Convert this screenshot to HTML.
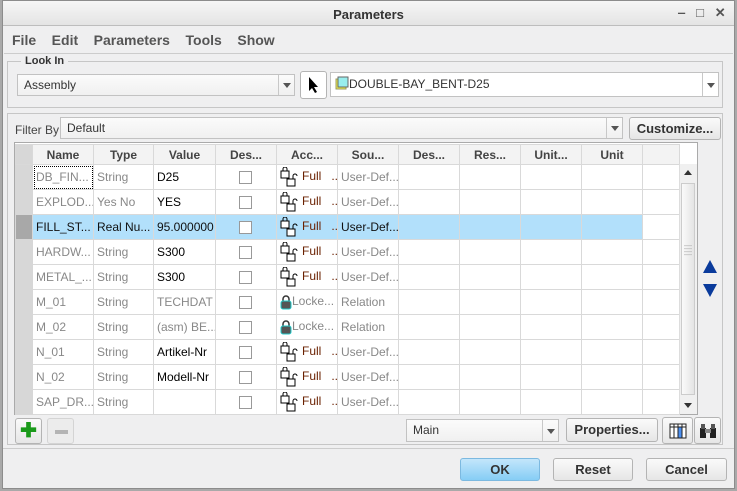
<!DOCTYPE html>
<html><head><style>
*{box-sizing:border-box;margin:0;padding:0}
body{width:737px;height:491px;overflow:hidden;background:#a9a9a9;font-family:"Liberation Sans",sans-serif;font-size:12px;color:#222;position:relative}
.a{position:absolute}
#win{left:2px;top:0;width:733px;height:489px;background:#efeff0;border:1px solid #8c8c8c}
.btn{position:absolute;border:1px solid #b4b4b4;border-radius:3px;background:linear-gradient(#fafafa,#e6e6e6);text-align:center;font-weight:bold;color:#333;font-size:13px}
.combo{position:absolute;border:1px solid #c2c2c2;background:linear-gradient(#fbfbfb,#f0f0f0);padding-left:6px;color:#333}
.combo .dd{position:absolute;right:0;top:0;bottom:0;width:16px;border-left:1px solid #c8c8c8}
.combo .dd:after{content:"";position:absolute;left:4px;top:50%;margin-top:-2px;border:4px solid transparent;border-top:5px solid #555;border-bottom:0}
.grp{position:absolute;border:1px solid #c6c6c6}
table{border-collapse:collapse;table-layout:fixed;position:absolute;left:15px;top:144px;width:664px;background:#fff}
td,th{border:1px solid #d9d9d9;height:25px;white-space:nowrap;overflow:hidden;padding-left:3px;text-align:left;font-weight:normal}
th{height:20px;background:#f3f3f3;font-weight:bold;color:#444;text-align:center;padding:0;font-size:12px}
td.rh{background:#d7d7d7;border-color:#d7d7d7}
th.rh{background:#d7d7d7}
.g{color:#888}
.k{color:#000}
tr.sel td{background:#b2e0fb;color:#111}
tr.sel td.rh{background:#a8a8a8}
.cb{display:inline-block;width:13px;height:13px;border:1px solid #999;background:#fff;margin-left:20px;vertical-align:middle}
.full{color:#6a2000;font-size:12px}
</style></head><body>
<div id="win" class="a"></div>
<div class="a" style="left:3px;top:1px;width:731px;height:25px;background:linear-gradient(#f6f6f6,#e4e4e4);border-bottom:1px solid #bdbdbd;text-align:center;line-height:27px;font-weight:bold;font-size:13px;color:#333">Parameters</div>
<div class="a" style="left:678px;top:5px;font-size:13px;color:#555;font-weight:bold;white-space:nowrap;width:60px">‒&nbsp;&nbsp; □&nbsp;&nbsp; ✕</div>
<div class="a" style="left:12px;top:32px;font-size:14px;color:#555;font-weight:bold;white-space:nowrap">File&nbsp;&nbsp;&nbsp; Edit&nbsp;&nbsp;&nbsp; Parameters&nbsp;&nbsp;&nbsp; Tools&nbsp;&nbsp;&nbsp; Show</div>
<div class="a" style="left:4px;top:53px;width:729px;border-top:1px solid #ccc"></div>
<div class="grp" style="left:7px;top:61px;width:716px;height:47px"></div>
<div class="a" style="left:21px;top:55px;background:#efeff0;padding:0 4px;font-weight:bold;font-size:11px;color:#333">Look In</div>
<div class="combo" style="left:17px;top:74px;width:278px;height:22px;line-height:20px">Assembly<div class="dd"></div></div>
<div class="btn" style="left:300px;top:71px;width:27px;height:28px;background:#fff"><svg width="14" height="18" style="margin-top:4px" viewBox="0 0 14 18"><path d="M2 1 L2 15 L5 12 L8 17 L10 16 L7 11 L11 11 Z" fill="#000"/></svg></div>
<div class="combo" style="left:330px;top:72px;width:389px;height:25px;line-height:23px;padding-left:4px;background:#fff"><svg width="14" height="14" style="vertical-align:-2px" viewBox="0 0 14 14"><rect x="1" y="3" width="10" height="10" fill="#ee4" stroke="#996"/><rect x="3" y="1" width="10" height="10" fill="#9ee" stroke="#666"/></svg>DOUBLE-BAY_BENT-D25<div class="dd"></div></div>
<div class="grp" style="left:7px;top:113px;width:716px;height:332px"></div>
<div class="a" style="left:15px;top:123px;color:#444">Filter By</div>
<div class="combo" style="left:60px;top:117px;width:563px;height:22px;line-height:20px">Default<div class="dd"></div></div>
<div class="btn" style="left:629px;top:117px;width:92px;height:23px;line-height:21px">Customize...</div>
<div class="a" style="left:14px;top:142px;width:684px;height:273px;border:1px solid #aaa;background:#fff;overflow:hidden"></div>
<table>
<colgroup><col style="width:17px"><col style="width:61px"><col style="width:60px"><col style="width:62px"><col style="width:61px"><col style="width:61px"><col style="width:61px"><col style="width:61px"><col style="width:61px"><col style="width:61px"><col style="width:61px"><col style="width:37px"></colgroup>
<tr><th class="rh"></th><th>Name</th><th>Type</th><th>Value</th><th>Des...</th><th>Acc...</th><th>Sou...</th><th>Des...</th><th>Res...</th><th>Unit...</th><th>Unit</th><th></th></tr>
<tr><td class="rh"></td><td class="g" style="outline:1px dotted #000;outline-offset:-2px">DB_FIN...</td><td class="g">String</td><td class="k">D25</td><td><span class="cb"></span></td><td><svg width="22" height="20" viewBox="0 0 22 20" style="vertical-align:middle"><rect x="1" y="4" width="8" height="7" fill="#fff" stroke="#000"/><path d="M3 4V2a2 2 0 0 1 4 0v2" fill="none" stroke="#000"/><rect x="7" y="12" width="8" height="7" fill="#fff" stroke="#000"/><path d="M13 12V9a2 2 0 0 1 4 0" fill="none" stroke="#000"/></svg><span class="full">Full&nbsp;&nbsp; ...</span></td><td class="g">User-Def...</td><td></td><td></td><td></td><td></td><td></td></tr>
<tr><td class="rh"></td><td class="g">EXPLOD...</td><td class="g">Yes No</td><td class="k">YES</td><td><span class="cb"></span></td><td><svg width="22" height="20" viewBox="0 0 22 20" style="vertical-align:middle"><rect x="1" y="4" width="8" height="7" fill="#fff" stroke="#000"/><path d="M3 4V2a2 2 0 0 1 4 0v2" fill="none" stroke="#000"/><rect x="7" y="12" width="8" height="7" fill="#fff" stroke="#000"/><path d="M13 12V9a2 2 0 0 1 4 0" fill="none" stroke="#000"/></svg><span class="full">Full&nbsp;&nbsp; ...</span></td><td class="g">User-Def...</td><td></td><td></td><td></td><td></td><td></td></tr>
<tr class="sel"><td class="rh"></td><td>FILL_ST...</td><td>Real Nu...</td><td>95.000000</td><td><span class="cb"></span></td><td><svg width="22" height="20" viewBox="0 0 22 20" style="vertical-align:middle"><rect x="1" y="4" width="8" height="7" fill="#fff" stroke="#000"/><path d="M3 4V2a2 2 0 0 1 4 0v2" fill="none" stroke="#000"/><rect x="7" y="12" width="8" height="7" fill="#fff" stroke="#000"/><path d="M13 12V9a2 2 0 0 1 4 0" fill="none" stroke="#000"/></svg><span class="full">Full&nbsp;&nbsp; ...</span></td><td>User-Def...</td><td></td><td></td><td></td><td></td><td style="background:#fff"></td></tr>
<tr><td class="rh"></td><td class="g">HARDW...</td><td class="g">String</td><td class="k">S300</td><td><span class="cb"></span></td><td><svg width="22" height="20" viewBox="0 0 22 20" style="vertical-align:middle"><rect x="1" y="4" width="8" height="7" fill="#fff" stroke="#000"/><path d="M3 4V2a2 2 0 0 1 4 0v2" fill="none" stroke="#000"/><rect x="7" y="12" width="8" height="7" fill="#fff" stroke="#000"/><path d="M13 12V9a2 2 0 0 1 4 0" fill="none" stroke="#000"/></svg><span class="full">Full&nbsp;&nbsp; ...</span></td><td class="g">User-Def...</td><td></td><td></td><td></td><td></td><td></td></tr>
<tr><td class="rh"></td><td class="g">METAL_...</td><td class="g">String</td><td class="k">S300</td><td><span class="cb"></span></td><td><svg width="22" height="20" viewBox="0 0 22 20" style="vertical-align:middle"><rect x="1" y="4" width="8" height="7" fill="#fff" stroke="#000"/><path d="M3 4V2a2 2 0 0 1 4 0v2" fill="none" stroke="#000"/><rect x="7" y="12" width="8" height="7" fill="#fff" stroke="#000"/><path d="M13 12V9a2 2 0 0 1 4 0" fill="none" stroke="#000"/></svg><span class="full">Full&nbsp;&nbsp; ...</span></td><td class="g">User-Def...</td><td></td><td></td><td></td><td></td><td></td></tr>
<tr><td class="rh"></td><td class="g">M_01</td><td class="g">String</td><td class="g">TECHDAT</td><td><span class="cb"></span></td><td class="g"><svg width="12" height="15" viewBox="0 0 12 15" style="vertical-align:middle"><path d="M3 6V4a3 3 0 0 1 6 0v2" fill="none" stroke="#333" stroke-width="1.5"/><rect x="1" y="6" width="10" height="8" rx="2" fill="#555" stroke="#2cc"/></svg>Locke...</td><td class="g">Relation</td><td></td><td></td><td></td><td></td><td></td></tr>
<tr><td class="rh"></td><td class="g">M_02</td><td class="g">String</td><td class="g">(asm) BE...</td><td><span class="cb"></span></td><td class="g"><svg width="12" height="15" viewBox="0 0 12 15" style="vertical-align:middle"><path d="M3 6V4a3 3 0 0 1 6 0v2" fill="none" stroke="#333" stroke-width="1.5"/><rect x="1" y="6" width="10" height="8" rx="2" fill="#555" stroke="#2cc"/></svg>Locke...</td><td class="g">Relation</td><td></td><td></td><td></td><td></td><td></td></tr>
<tr><td class="rh"></td><td class="g">N_01</td><td class="g">String</td><td class="k">Artikel-Nr</td><td><span class="cb"></span></td><td><svg width="22" height="20" viewBox="0 0 22 20" style="vertical-align:middle"><rect x="1" y="4" width="8" height="7" fill="#fff" stroke="#000"/><path d="M3 4V2a2 2 0 0 1 4 0v2" fill="none" stroke="#000"/><rect x="7" y="12" width="8" height="7" fill="#fff" stroke="#000"/><path d="M13 12V9a2 2 0 0 1 4 0" fill="none" stroke="#000"/></svg><span class="full">Full&nbsp;&nbsp; ...</span></td><td class="g">User-Def...</td><td></td><td></td><td></td><td></td><td></td></tr>
<tr><td class="rh"></td><td class="g">N_02</td><td class="g">String</td><td class="k">Modell-Nr</td><td><span class="cb"></span></td><td><svg width="22" height="20" viewBox="0 0 22 20" style="vertical-align:middle"><rect x="1" y="4" width="8" height="7" fill="#fff" stroke="#000"/><path d="M3 4V2a2 2 0 0 1 4 0v2" fill="none" stroke="#000"/><rect x="7" y="12" width="8" height="7" fill="#fff" stroke="#000"/><path d="M13 12V9a2 2 0 0 1 4 0" fill="none" stroke="#000"/></svg><span class="full">Full&nbsp;&nbsp; ...</span></td><td class="g">User-Def...</td><td></td><td></td><td></td><td></td><td></td></tr>
<tr><td class="rh"></td><td class="g">SAP_DR...</td><td class="g">String</td><td></td><td><span class="cb"></span></td><td><svg width="22" height="20" viewBox="0 0 22 20" style="vertical-align:middle"><rect x="1" y="4" width="8" height="7" fill="#fff" stroke="#000"/><path d="M3 4V2a2 2 0 0 1 4 0v2" fill="none" stroke="#000"/><rect x="7" y="12" width="8" height="7" fill="#fff" stroke="#000"/><path d="M13 12V9a2 2 0 0 1 4 0" fill="none" stroke="#000"/></svg><span class="full">Full&nbsp;&nbsp; ...</span></td><td class="g">User-Def...</td><td></td><td></td><td></td><td></td><td></td></tr>
</table>
<div class="a" style="left:679px;top:164px;width:18px;height:250px;background:#f0f0f0;border-left:1px solid #ddd"></div>
<div class="a" style="left:681px;top:183px;width:14px;height:212px;background:linear-gradient(90deg,#fafafa,#e4e4e4);border:1px solid #ccc"></div>
<div class="a" style="left:684px;top:244px;color:#aaa;font-size:8px;line-height:3px">—<br>—<br>—<br>—</div>
<div class="a" style="left:684px;top:170px;border:4px solid transparent;border-bottom:5px solid #333;border-top:0"></div>
<div class="a" style="left:684px;top:403px;border:4px solid transparent;border-top:5px solid #333;border-bottom:0"></div>
<div class="a" style="left:703px;top:260px;border:7px solid transparent;border-bottom:13px solid #0a3b9c;border-top:0"></div>
<div class="a" style="left:703px;top:284px;border:7px solid transparent;border-top:13px solid #0a3b9c;border-bottom:0"></div>
<div class="btn" style="left:15px;top:418px;width:27px;height:26px;color:#1a9a1a;font-size:20px;line-height:24px">✚</div>
<div class="btn" style="left:47px;top:418px;width:27px;height:26px;background:#ececec;border-color:#d4d4d4"><div class="a" style="left:7px;top:11px;width:13px;height:4px;background:#b4b4b4"></div></div>
<div class="combo" style="left:406px;top:419px;width:153px;height:23px;line-height:21px;font-size:12px">Main<div class="dd"></div></div>
<div class="btn" style="left:566px;top:418px;width:92px;height:24px;line-height:22px">Properties...</div>
<div class="btn" style="left:662px;top:417px;width:31px;height:27px"><svg width="18" height="16" viewBox="0 0 18 16" style="margin-top:5px"><rect x="1" y="1" width="16" height="14" fill="#fff" stroke="#222"/><path d="M1 4H17M5 1V15M9 1V15M13 1V15" stroke="#222"/><rect x="9.5" y="4.5" width="3" height="10" fill="#4a8ff0"/></svg></div>
<div class="btn" style="left:694px;top:417px;width:27px;height:27px"><svg width="18" height="16" viewBox="0 0 18 16" style="margin-top:5px"><rect x="1" y="5" width="6" height="10" fill="#222"/><rect x="11" y="5" width="6" height="10" fill="#222"/><rect x="2" y="1" width="4" height="5" fill="#555"/><rect x="12" y="1" width="4" height="5" fill="#555"/><rect x="6" y="6" width="6" height="4" fill="#888"/></svg></div>
<div class="a" style="left:3px;top:448px;width:731px;border-top:1px solid #ccc"></div>
<div class="btn" style="left:460px;top:458px;width:80px;height:23px;line-height:21px;background:linear-gradient(#c3e6fb,#86cdf5);border-color:#7cb9e0">OK</div>
<div class="btn" style="left:553px;top:458px;width:80px;height:23px;line-height:21px">Reset</div>
<div class="btn" style="left:646px;top:458px;width:81px;height:23px;line-height:21px">Cancel</div>
</body></html>
